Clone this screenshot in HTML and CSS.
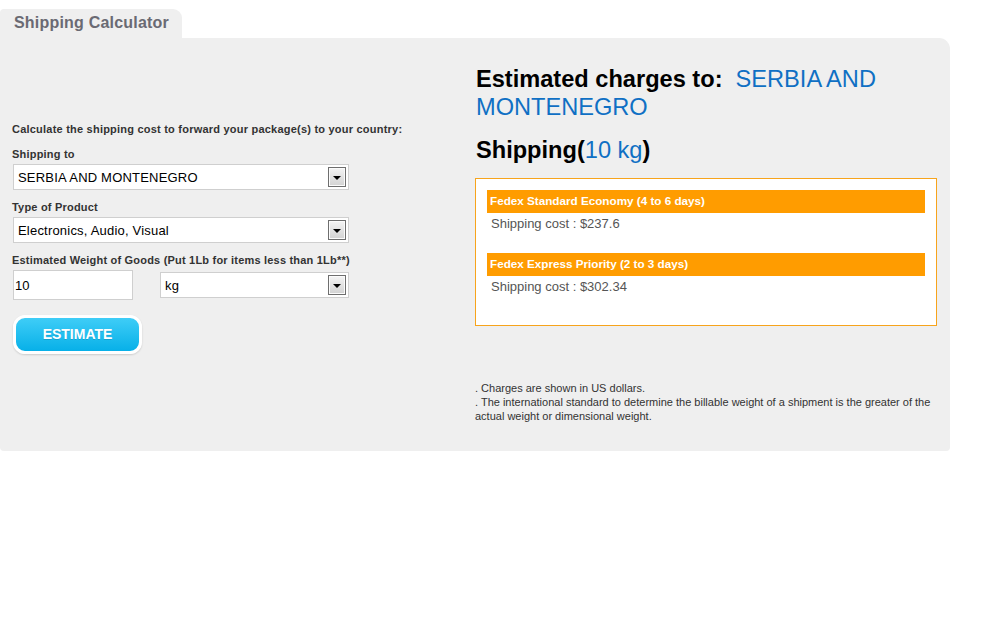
FILE: index.html
```html
<!DOCTYPE html>
<html>
<head>
<meta charset="utf-8">
<link rel="stylesheet" href="styles.css">
</head>
<body>
<div class="calc">
  <div class="tab">Shipping Calculator</div>
  <div class="panel">
    <div class="left">
      <p class="intro">Calculate the shipping cost to forward your package(s) to your country:</p>
      <div class="label">Shipping to</div>
      <div class="select wide"><span>SERBIA AND MONTENEGRO</span><i class="arrow"></i></div>
      <div class="label">Type of Product</div>
      <div class="select wide"><span>Electronics, Audio, Visual</span><i class="arrow"></i></div>
      <div class="label">Estimated Weight of Goods (Put 1Lb for items less than 1Lb**)</div>
      <div class="weight-row">
        <div class="input">10</div>
        <div class="select unit"><span>kg</span><i class="arrow"></i></div>
      </div>
      <div class="btn">ESTIMATE</div>
    </div>
    <div class="right">
      <h2 class="heading">Estimated charges to:&nbsp; <span class="blue">SERBIA AND MONTENEGRO</span></h2>
      <h2 class="heading ship">Shipping(<span class="blue">10 kg</span>)</h2>
      <div class="results">
        <div class="bar">Fedex Standard Economy (4 to 6 days)</div>
        <div class="cost">Shipping cost : $237.6</div>
        <div class="bar second">Fedex Express Priority (2 to 3 days)</div>
        <div class="cost">Shipping cost : $302.34</div>
      </div>
      <div class="notes">
        <div>. Charges are shown in US dollars.</div>
        <div>. The international standard to determine the billable weight of a shipment is the greater of the actual weight or dimensional weight.</div>
      </div>
    </div>
  </div>
</div>
</body>
</html>
```
FILE: styles.css
```css
html, body {
  margin: 0;
  padding: 0;
  background: #fff;
  font-family: "Liberation Sans", Arial, sans-serif;
}
.calc {
  padding-top: 9px;
  width: 950px;
}
.tab {
  width: 168px;
  height: 29px;
  padding-left: 14px;
  background: #efefef;
  border-radius: 4px 9px 0 0;
  color: #6a6a73;
  font-size: 16px;
  font-weight: bold;
  letter-spacing: 0.2px;
  line-height: 28px;
}
.panel {
  display: flex;
  height: 413px;
  background: #efefef;
  border-radius: 0 11px 4px 4px;
}
.left {
  width: 475px;
  padding-left: 12px;
  box-sizing: border-box;
}
.intro {
  margin: 84px 0 0;
  font-size: 11px;
  font-weight: bold;
  letter-spacing: 0.22px;
  line-height: 14px;
  color: #333;
}
.label {
  margin-top: 11px;
  font-size: 11px;
  font-weight: bold;
  letter-spacing: 0.2px;
  line-height: 14px;
  color: #333;
}
.label + .select, .label + .weight-row { margin-top: 3px; }
.select + .label { margin-top: 10px; }
.select {
  position: relative;
  display: flex;
  align-items: center;
  height: 26px;
  box-sizing: border-box;
  background: #fff;
  border: 1px solid #cfcfcf;
  font-size: 13px;
  letter-spacing: 0.2px;
  color: #000;
  padding-left: 4px;
}
.wide { width: 336px; margin-left: 1px; }
.arrow {
  position: absolute;
  right: 2px;
  top: 2px;
  width: 18px;
  height: 20px;
  box-sizing: border-box;
  border: 1px solid #6e6e6e;
  box-shadow: inset 0 0 0 1px #fbfbfb;
  background: linear-gradient(#f4f4f4, #d2d2d2);
}
.arrow::after {
  content: "";
  position: absolute;
  left: 4px;
  top: 8px;
  border-left: 4px solid transparent;
  border-right: 4px solid transparent;
  border-top: 4px solid #000;
}
.weight-row {
  display: flex;
  align-items: center;
  margin-left: 1px;
}
.input {
  width: 120px;
  height: 30px;
  box-sizing: border-box;
  background: #fff;
  border: 1px solid #cfcfcf;
  font-size: 13px;
  line-height: 30px;
  padding-left: 1px;
}
.unit {
  width: 189px;
  margin-left: 27px;
}
.btn {
  width: 129px;
  height: 39px;
  margin-top: 15px;
  margin-left: 1px;
  box-sizing: border-box;
  border: 3px solid #fff;
  border-radius: 12px;
  background: linear-gradient(#3fcdf7, #07b0e8);
  box-shadow: 0 1px 2px rgba(0,0,0,0.15);
  color: #fff;
  font-size: 14px;
  font-weight: bold;
  text-align: center;
  line-height: 33px;
  text-shadow: 0 1px 0 rgba(0,0,0,0.15);
}
.right {
  width: 462px;
  padding-top: 27px;
}
.heading {
  margin: 0 0 0 1px;
  font-size: 23.6px;
  font-weight: bold;
  line-height: 28px;
  color: #000;
}
.blue { color: #0f70c4; font-weight: normal; }
.ship { margin-top: 15px; }
.results {
  margin-top: 14px;
  height: 148px;
  box-sizing: border-box;
  background: #fff;
  border: 1px solid #f7a41c;
  padding: 11px 11px 0;
}
.bar {
  height: 23px;
  background: #ff9c00;
  color: #fff;
  font-size: 11.7px;
  font-weight: bold;
  line-height: 22px;
  padding-left: 3px;
}
.bar.second { margin-top: 22px; }
.cost {
  margin-top: 4px;
  padding-left: 4px;
  font-size: 13px;
  line-height: 14px;
  color: #555;
}
.notes {
  margin-top: 55px;
  font-size: 11px;
  line-height: 14px;
  color: #333;
}
```
